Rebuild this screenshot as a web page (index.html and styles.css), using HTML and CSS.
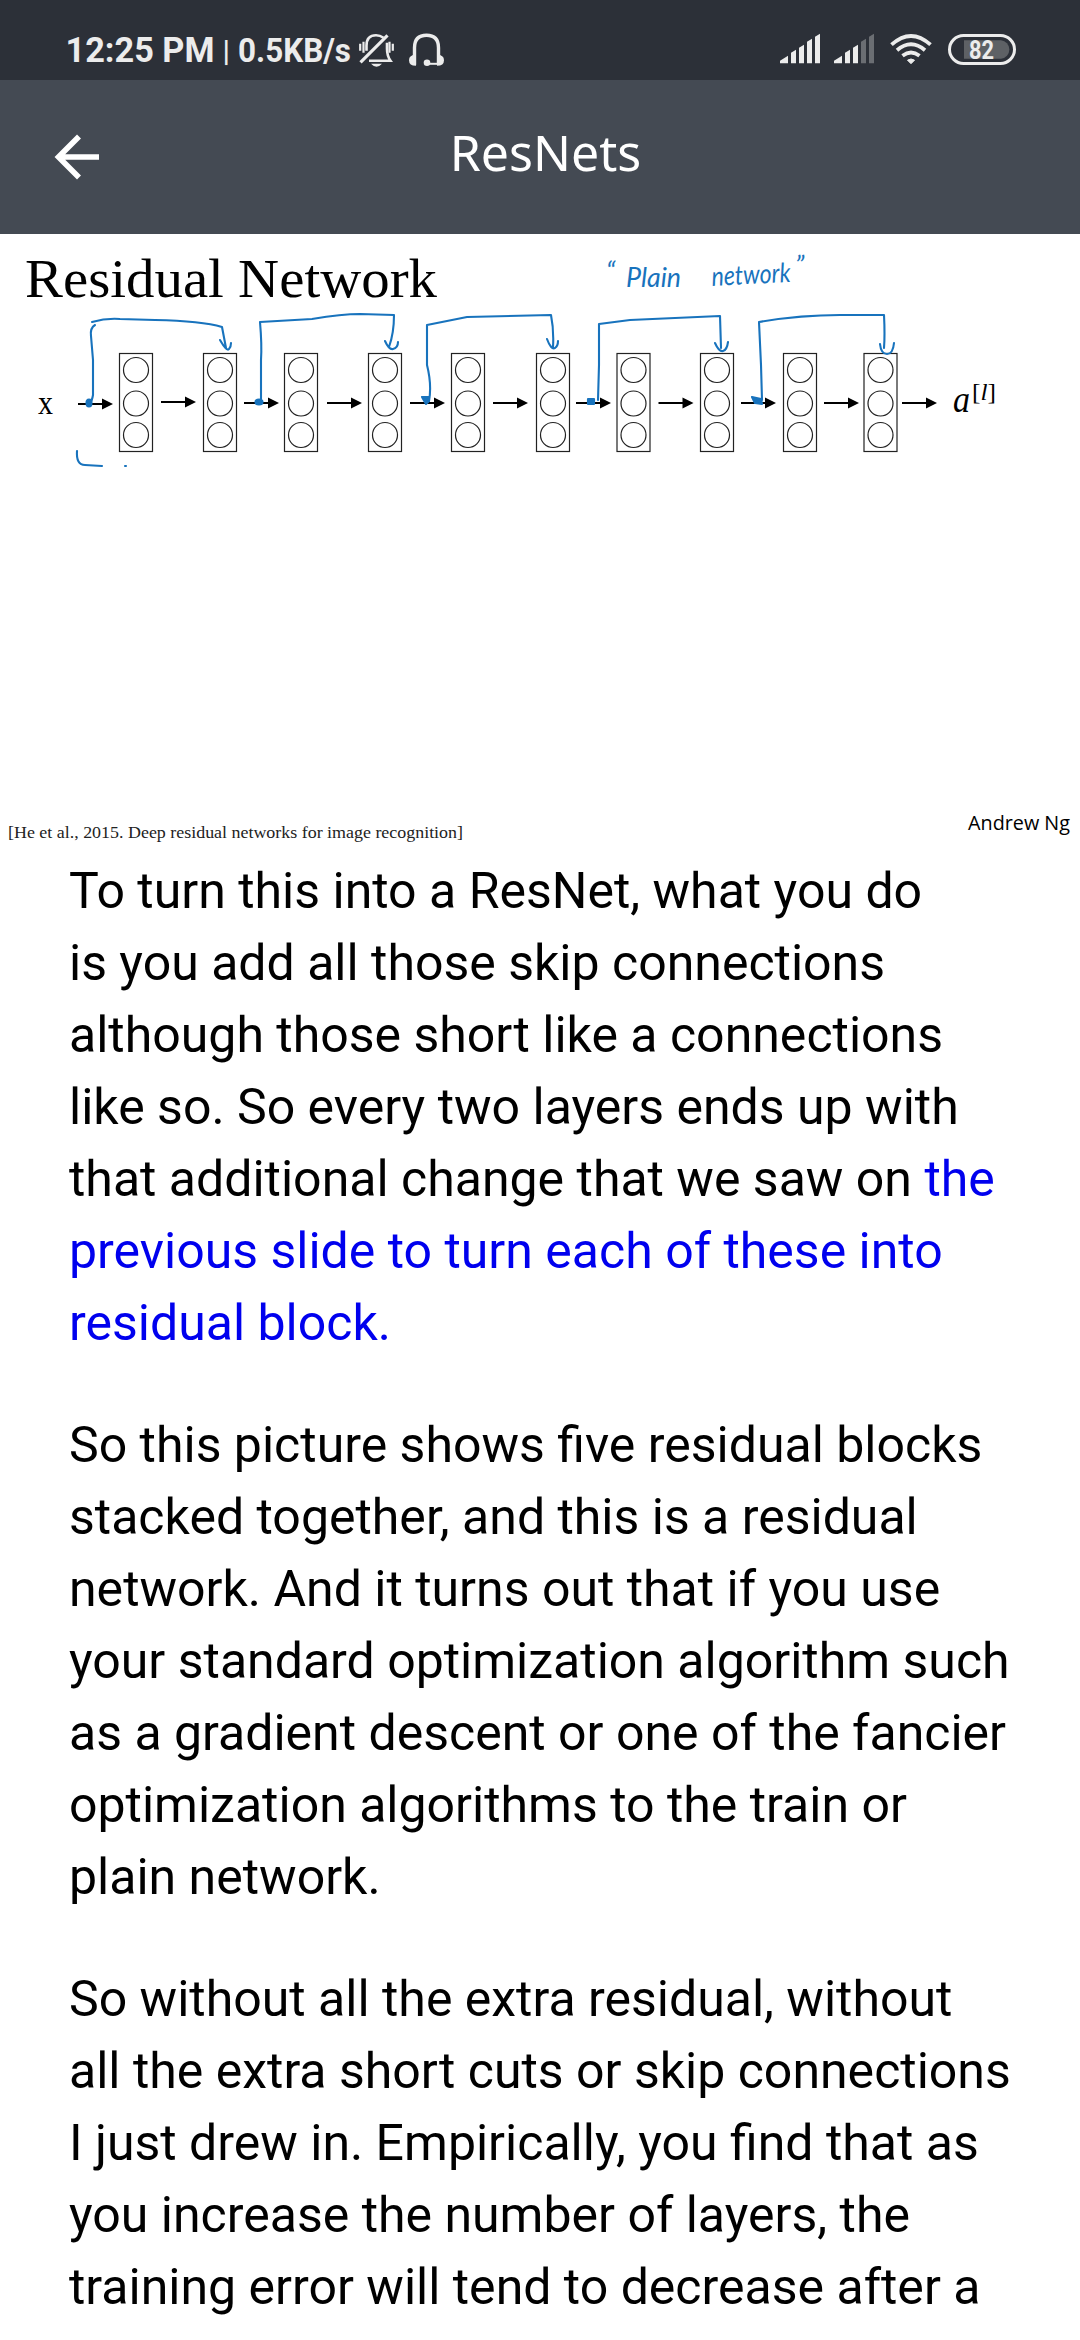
FILE: index.html
```html
<!DOCTYPE html>
<html lang="en">
<head>
<meta charset="utf-8">
<title>ResNets</title>
<link rel="stylesheet" href="styles.css">
</head>
<body>
<div class="status">
  <div class="status-left">
    <svg class="status-text" width="295" height="80" viewBox="60 0 295 80">
      <text class="clock" x="65.500" y="62" textLength="149" lengthAdjust="spacingAndGlyphs">12:25 PM</text>
      <text class="sep" x="222.500" y="61">|</text>
      <text class="speed" x="238" y="62" textLength="113" lengthAdjust="spacingAndGlyphs">0.5KB/s</text>
    </svg>
    <svg class="icon" width="90" height="80" viewBox="355 1.2 90 80" fill="none" stroke="#ececec" stroke-width="2.6">
      <path d="M366.500 52V47Q366.500 36.500 376 36.500Q380 36.500 383.500 39M387 44V50Q387 57 390.500 62H369" stroke-width="2.6"/>
      <path d="M360.500 63.500L387.500 36.500" stroke-width="3.200"/>
      <path d="M360.200 45V52M363.500 43V54M389.500 43V54M392.800 45V52" stroke-width="2.200"/>
      <path d="M371 65H382Q376.500 71 371 65Z" fill="#ececec" stroke="none"/>
      <path d="M414.500 66V49Q414.500 36.500 426.500 36.500Q438.500 36.500 438.500 49V66" stroke-width="3.400"/>
      <path d="M427 65H439" stroke-width="2"/>
      <circle cx="427" cy="64" r="3.300" fill="#ececec" stroke="none"/>
      <path d="M416 56V67Q409 67 409 61.500Q409 56 416 56ZM437 56V67Q444 67 444 61.500Q444 56 437 56Z" fill="#ececec" stroke="none"/>
    </svg>
  </div>
  <svg class="icon" width="240" height="80" viewBox="780 1.3 240 80">
    <g fill="#ececec">
      <path d="M780 64.500V62L788 57V64.500ZM791 64.500V54L796 51V64.500ZM799 64.500V49L804 46V64.500ZM807 64.500V43L812 40V64.500ZM815 64.500V38L820 35V64.500Z"/>
      <path d="M834 64.500V62L842 57V64.500ZM845 64.500V54L850 51V64.500ZM853 64.500V49L858 46V64.500Z"/>
      <path d="M861 64.500V43L866 40V64.500ZM869 64.500V38L874 35V64.500Z" fill="#6b6e73"/>
      <path d="M911 65L907.500 61.500Q911 59 914.500 61.500Z" stroke="#ececec"/>
    </g>
    <path d="M891.500 46Q911 28.500 930.500 46M897 51.500Q911 39.500 925 51.500M902.500 57Q911 50.500 919.500 57" fill="none" stroke="#ececec" stroke-width="3.800"/>
    <rect x="949.500" y="36.800" width="65" height="28" rx="14" fill="none" stroke="#ececec" stroke-width="3"/>
    <path d="M964 41.500H1001A9.300 9.300 0 0 1 1001 60H964Z" fill="#5e6165"/>
    <text class="battery" x="969" y="60" textLength="25" lengthAdjust="spacingAndGlyphs">82</text>
  </svg>
</div>
<header class="bar">
  <svg class="back" width="44" height="46" viewBox="55 139 44 46"><path d="M79 141.500L58.500 162L79 182.500M59 162H99" fill="none" stroke="#fff" stroke-width="5.600"/></svg>
  <h1 class="title">ResNets</h1>
</header>
<main>
  <svg class="slide" width="1080" height="607" viewBox="0 234 1080 607">
    <defs>
      <g id="layer" class="layer">
        <rect x="-16.500" y="353.500" width="33" height="98"/>
        <circle cy="370" r="12.500"/><circle cy="403.500" r="12.500"/><circle cy="435" r="12.500"/>
      </g>
      <g id="arrow"><path d="M0 403H26" stroke="#000" stroke-width="2"/><path d="M24 397.500L35 403L24 408.500Z"/></g>
    </defs>
    <text class="heading" x="25" y="297" textLength="412" lengthAdjust="spacingAndGlyphs">Residual Network</text>
    <text class="input" x="38" y="413.500" textLength="15" lengthAdjust="spacingAndGlyphs">x</text>
    <use href="#layer" x="136"/><use href="#layer" x="220"/><use href="#layer" x="301"/><use href="#layer" x="385"/><use href="#layer" x="468"/>
    <use href="#layer" x="553"/><use href="#layer" x="633.500"/><use href="#layer" x="717"/><use href="#layer" x="800"/><use href="#layer" x="880.500"/>
    <use href="#arrow" x="78" y="1"/><use href="#arrow" x="161" y="-1"/><use href="#arrow" x="244"/><use href="#arrow" x="327"/><use href="#arrow" x="410"/>
    <use href="#arrow" x="493"/><use href="#arrow" x="576"/><use href="#arrow" x="658.500"/><use href="#arrow" x="741"/><use href="#arrow" x="824"/><use href="#arrow" x="902"/>
    <g class="ink">
      <path d="M92 322Q106 318 120 319L155 320Q202 321 222 327L226 348M220 340Q227 352 229 349Q231 347 231 343M95 325Q90 328 91 336L93 360V395Q92 401 90 403"/>
      <path d="M261 399V360Q262 345 260 322L312 319Q342 314 360 314L394 315Q394 333 389 347M385 341Q389 350 393 349Q398 348 398 342"/>
      <path d="M429 401Q432 385 427 365V325L467 317L551 315Q554 330 553 347M547 339Q551 350 555 348Q558 346 558 341"/>
      <path d="M598 400L599 365V324L630 320L720 316L721 348M715 343Q719 352 723 351Q727 350 728 342"/>
      <path d="M762 400L761 365L759 322Q800 315 840 315H884Q885 335 884 348M880 344Q881 354 887 354Q893 354 894 343"/>
      <path d="M77 451Q76 465 85 465L102 466M125 466H126"/>
      <g class="dots"><ellipse cx="89" cy="403" rx="2.500" ry="3.500"/><ellipse cx="259" cy="402" rx="3.500" ry="2.500"/><path d="M422 397H429V401L426 404Z"/><path d="M588 399H594V404H588Z"/><path d="M752 397L761 399L762 404L755 403Z"/></g>
    </g>
    <g class="note">
      <text x="606" y="281">“</text>
      <text x="626" y="287" textLength="55" lengthAdjust="spacingAndGlyphs">Plain</text>
      <text x="712" y="286" textLength="79" lengthAdjust="spacingAndGlyphs" transform="rotate(-3 712 286)">network</text>
      <text x="795" y="275">”</text>
    </g>
    <text class="math" x="953" y="411.500" textLength="17" lengthAdjust="spacingAndGlyphs">a</text>
    <text class="sup" x="972" y="400" textLength="24" lengthAdjust="spacingAndGlyphs">[<tspan class="it">l</tspan>]</text>
    <text class="cite" x="8" y="837.500" textLength="455" lengthAdjust="spacingAndGlyphs">[He et al., 2015. Deep residual networks for image recognition]</text>
    <text class="author" x="968" y="830" textLength="102" lengthAdjust="spacingAndGlyphs">Andrew Ng</text>
  </svg>
  <article class="transcript">
    <p>To turn this into a ResNet, what you do<br>is you add all those skip connections<br>although those short like a connections<br>like so. So every two layers ends up with<br>that additional change that we saw on <span class="link">the<br>previous slide to turn each of these into<br>residual block.</span></p>
    <p>So this picture shows five residual blocks<br>stacked together, and this is a residual<br>network. And it turns out that if you use<br>your standard optimization algorithm such<br>as a gradient descent or one of the fancier<br>optimization algorithms to the train or<br>plain network.</p>
    <p>So without all the extra residual, without<br>all the extra short cuts or skip connections<br>I just drew in. Empirically, you find that as<br>you increase the number of layers, the<br>training error will tend to decrease after a</p>
  </article>
</main>
</body>
</html>
```
FILE: styles.css
```css
body { margin: 0; width: 1080px; height: 2340px; overflow: hidden; background: #fff; font-family: Roboto, sans-serif; color: #000; }
.status { height: 80px; box-sizing: border-box; display: flex; justify-content: space-between; padding: 0 60px; background: #2c3038; }
.status-left { display: flex; }
svg { display: block; flex: none; overflow: visible; }
.clock, .speed, .sep, .battery { font-family: Roboto, sans-serif; font-weight: 500; fill: #ececec; }
.clock { font-size: 35px; font-weight: 700; }
.speed { font-size: 33px; font-weight: 700; }
.sep { font-size: 30px; }
.battery { font-size: 25px; font-weight: 700; }
.bar { height: 154px; display: grid; grid-template-columns: 44px 1fr 44px; align-items: center; padding: 0 55px; box-sizing: border-box; background: #444a53; }
.title { margin: 0 0 11px 11px; text-align: center; color: #fff; font: 400 50px/70px "Noto Sans", sans-serif; }
.heading, .input, .cite { font-family: "Liberation Serif", serif; }
.heading { font-size: 55px; }
.input { font-size: 34px; }
.cite { font-size: 17px; fill: #222; }
.author { font: 20px "Open Sans", sans-serif; }
.layer { fill: #fff; stroke: #222; stroke-width: 1.2; }
.ink { fill: none; stroke: #1873bd; stroke-width: 2.1; stroke-linecap: round; stroke-linejoin: round; }
.dots { fill: #1873bd; }
.note { font: italic 400 27px Lato, sans-serif; fill: #1873bd; }
.math { font: italic 38px "Liberation Serif", serif; }
.sup { font: 24px "Liberation Serif", serif; }
.it { font-style: italic; }
.transcript { padding: 14px 0 0 69px; font-size: 50px; line-height: 72px; white-space: nowrap; }
.transcript p { margin: 0 0 50px; }
.link { color: #0000ee; }
```
